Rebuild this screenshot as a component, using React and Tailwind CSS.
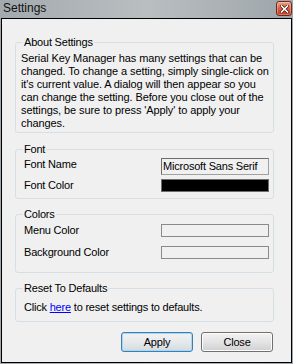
import React from 'react';

function GroupBox({ title, className = '', legendClass = '', children }) {
  return (
    <fieldset className={`border border-[#d5dfe5] rounded-[3px] ${className}`}>
      <legend className={`px-[1px] leading-[14px] ${legendClass}`}>{title}</legend>
      {children}
    </fieldset>
  );
}

function CloseGlyph() {
  return (
    <div className="w-[16px] h-[15px] rounded-[3px] border border-[#6b2a1c] bg-gradient-to-b from-[#eea28a] via-[#d95a40] to-[#c5391f] flex items-center justify-center shadow-[inset_0_0_0_1px_rgba(255,255,255,0.3)]">
      <svg width="9" height="8" viewBox="0 0 9 8">
        <path d="M1.5 1 L7.5 7 M7.5 1 L1.5 7" stroke="#3b1a12" strokeWidth="3" strokeLinecap="square" />
        <path d="M1.5 1 L7.5 7 M7.5 1 L1.5 7" stroke="#ffffff" strokeWidth="1.6" strokeLinecap="square" />
      </svg>
    </div>
  );
}

export default function App() {
  return (
    <div
      className="w-[293px] h-[364px] flex flex-col bg-gradient-to-r from-[#a3aaae] via-[#b9bec1] to-[#9ea5aa] text-black text-[11px] tracking-[-0.2px]"
      style={{ fontFamily: '"Liberation Sans", Arial, sans-serif' }}
    >
      {/* TITLE BAR */}
      <div className="h-[18px] flex items-start justify-between pl-[3px] pr-[1px]">
        <span className="text-[12px] leading-[15px] mt-[1px] tracking-normal text-[#111]">Settings</span>
        <div className="mt-[1px]">
          <CloseGlyph />
        </div>
      </div>

      {/* CLIENT */}
      <div className="flex-1 mx-[1px] mb-[1px] border border-black bg-[#f0f0f0] pl-[13px] pr-[17px]">

        {/* ABOUT */}
        <GroupBox title="About Settings" className="mt-[16px] pl-[5px] pb-[2px]" legendClass="ml-[2px]">
          <p className="pt-[3px] leading-[13px] whitespace-nowrap tracking-[-0.1px]">
            Serial Key Manager has many settings that can be<br />
            changed. To change a setting, simply single-click on<br />
            it's current value. A dialog will then appear so you<br />
            can change the setting. Before you close out of the<br />
            settings, be sure to press 'Apply' to apply your<br />
            changes.
          </p>
        </GroupBox>

        {/* FONT */}
        <GroupBox title="Font" className="mt-[9px] pl-[8px] pr-[4px] pb-[6px]" legendClass="-ml-[1px]">
          <div className="flex justify-between items-start mt-[2px] leading-[13px]">
            <span>Font Name</span>
            <div className="w-[108px] h-[17px] border border-t-[#6d6d6d] border-l-[#6d6d6d] border-r-[#a0a0a0] border-b-[#a0a0a0] pl-[1px] flex items-center">
              Microsoft Sans Serif
            </div>
          </div>
          <div className="flex justify-between items-start mt-[4px] leading-[13px]">
            <span>Font Color</span>
            <div className="w-[108px] h-[13px] border border-[#6d6d6d] bg-black"></div>
          </div>
        </GroupBox>

        {/* COLORS */}
        <GroupBox title="Colors" className="mt-[8px] pl-[8px] pr-[4px] pb-[13px]" legendClass="-ml-[1px]">
          <div className="flex justify-between items-start mt-[3px] leading-[13px]">
            <span>Menu Color</span>
            <div className="w-[108px] h-[13px] border border-[#8a8a8a] bg-[#f0f0f0]"></div>
          </div>
          <div className="flex justify-between items-start mt-[9px] leading-[13px]">
            <span>Background Color</span>
            <div className="w-[108px] h-[13px] border border-[#8a8a8a] bg-[#f0f0f0]"></div>
          </div>
        </GroupBox>

        {/* RESET */}
        <GroupBox title="Reset To Defaults" className="mt-[8px] pl-[8px] pr-[4px] pb-[7px]" legendClass="-ml-[1px]">
          <p className="mt-[6px] leading-[13px]">
            Click <a href="#" className="text-[#0000ff] underline">here</a> to reset settings to defaults.
          </p>
        </GroupBox>

        {/* BUTTONS */}
        <div className="flex justify-end gap-[8px] mt-[10px] mr-[1px]">
          <button className="w-[72px] h-[20px] rounded-[3px] border border-[#3c7fb1] bg-gradient-to-b from-[#f2f2f2] via-[#e6e9eb] to-[#d3dbe0] shadow-[inset_0_0_0_1px_#a6d8f4] leading-[18px]">
            Apply
          </button>
          <button className="w-[72px] h-[20px] rounded-[3px] border border-[#707070] bg-gradient-to-b from-[#f2f2f2] via-[#e4e4e4] to-[#d0d0d0] shadow-[inset_0_0_0_1px_#fcfcfc] leading-[18px]">
            Close
          </button>
        </div>
      </div>
    </div>
  );
}
